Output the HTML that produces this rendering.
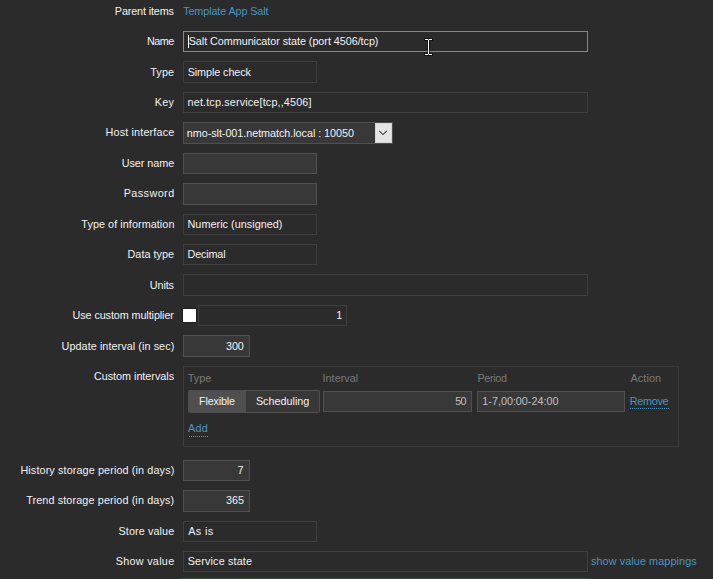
<!DOCTYPE html>
<html><head><meta charset="utf-8">
<style>
html,body{margin:0;padding:0;}
body{width:713px;height:579px;overflow:hidden;background:#2b2b2b;color:#f2f2f2;font-family:"Liberation Sans",sans-serif;font-size:10.8px;position:relative;}
.b{position:absolute;box-sizing:border-box;}
.t{position:absolute;line-height:12px;white-space:nowrap;}
</style></head><body>
<div class="b" style="left:183px;top:31px;width:405px;height:21px;border:1px solid #768d99;"></div>
<div class="b" style="left:183px;top:61px;width:134px;height:22px;border:1px solid #3e3e3e;"></div>
<div class="b" style="left:183px;top:92px;width:405px;height:21px;border:1px solid #3e3e3e;"></div>
<div class="b" style="left:183px;top:122px;width:210px;height:22px;border:1px solid #4f4f4f;background:#383838;"></div>
<div class="b" style="left:183px;top:153px;width:134px;height:21px;border:1px solid #4f4f4f;background:#383838;"></div>
<div class="b" style="left:183px;top:183px;width:134px;height:22px;border:1px solid #4f4f4f;background:#383838;"></div>
<div class="b" style="left:183px;top:214px;width:134px;height:21px;border:1px solid #3e3e3e;"></div>
<div class="b" style="left:183px;top:244px;width:134px;height:21px;border:1px solid #3e3e3e;"></div>
<div class="b" style="left:183px;top:274px;width:405px;height:22px;border:1px solid #3e3e3e;"></div>
<div class="b" style="left:198px;top:305px;width:149px;height:21px;border:1px solid #3e3e3e;"></div>
<div class="b" style="left:183px;top:335px;width:67px;height:22px;border:1px solid #4f4f4f;background:#383838;"></div>
<div class="b" style="left:183px;top:366px;width:496px;height:81px;border:1px solid #3a3a3a;"></div>
<div class="b" style="left:323px;top:391px;width:149px;height:21px;border:1px solid #4f4f4f;background:#383838;"></div>
<div class="b" style="left:477px;top:391px;width:148px;height:21px;border:1px solid #4f4f4f;background:#383838;"></div>
<div class="b" style="left:183px;top:460px;width:67px;height:21px;border:1px solid #4f4f4f;background:#383838;"></div>
<div class="b" style="left:183px;top:490px;width:67px;height:22px;border:1px solid #4f4f4f;background:#383838;"></div>
<div class="b" style="left:183px;top:521px;width:134px;height:21px;border:1px solid #3e3e3e;"></div>
<div class="b" style="left:183px;top:551px;width:405px;height:21px;border:1px solid #3e3e3e;"></div>
<div class="b" style="left:188px;top:390px;width:58px;height:23px;background:#4f4f4f;border-radius:2px 0 0 2px"></div><div class="b" style="left:246px;top:390px;width:74px;height:23px;border:1px solid #4f4f4f;border-left:0;background:#383838;border-radius:0 2px 2px 0"></div>
<div class="b" style="left:375px;top:123px;width:17px;height:20px;background:#e5e5e5;border:1px solid #d6d6d6"></div><svg class="b" style="left:375px;top:123px" width="17" height="20" viewBox="0 0 17 20"><polyline points="4.2,7.8 8,11.6 11.8,7.8" fill="none" stroke="#3c3c3c" stroke-width="1.05"/></svg>
<div class="b" style="left:183px;top:309px;width:13px;height:13px;background:#fff;box-shadow:0 0 0 1px #202020"></div>
<div class="b" style="left:188px;top:35px;width:1px;height:13px;background:#fff"></div>
<div class="b" style="left:189px;top:436px;width:20px;height:1px;background:repeating-linear-gradient(90deg,#4796c4 0 1px,transparent 1px 2px)"></div><div class="b" style="left:630px;top:408px;width:40px;height:1px;background:repeating-linear-gradient(90deg,#4796c4 0 1px,transparent 1px 2px)"></div>
<div class="b" style="left:179px;top:578px;width:412px;height:1px;background:#324a3a"></div>
<span class="t" style="left:114.83px;top:5px;letter-spacing:-0.132px;color:#f2f2f2">Parent items</span>
<span class="t" style="left:146.93px;top:35px;letter-spacing:-0.527px;color:#f2f2f2">Name</span>
<span class="t" style="left:150.26px;top:66px;letter-spacing:0.114px;color:#f2f2f2">Type</span>
<span class="t" style="left:154.83px;top:96px;letter-spacing:0.197px;color:#f2f2f2">Key</span>
<span class="t" style="left:105.53px;top:126px;letter-spacing:0.159px;color:#f2f2f2">Host interface</span>
<span class="t" style="left:121.79px;top:157px;letter-spacing:-0.056px;color:#f2f2f2">User name</span>
<span class="t" style="left:123.73px;top:187px;letter-spacing:0.432px;color:#f2f2f2">Password</span>
<span class="t" style="left:81.36px;top:218px;letter-spacing:0.067px;color:#f2f2f2">Type of information</span>
<span class="t" style="left:127.53px;top:248px;letter-spacing:0.032px;color:#f2f2f2">Data type</span>
<span class="t" style="left:149.79px;top:279px;letter-spacing:-0.104px;color:#f2f2f2">Units</span>
<span class="t" style="left:72.59px;top:309px;letter-spacing:-0.093px;color:#f2f2f2">Use custom multiplier</span>
<span class="t" style="left:61.59px;top:340px;letter-spacing:0.072px;color:#f2f2f2">Update interval (in sec)</span>
<span class="t" style="left:93.98px;top:370px;letter-spacing:-0.023px;color:#f2f2f2">Custom intervals</span>
<span class="t" style="left:20.43px;top:464px;letter-spacing:0.123px;color:#f2f2f2">History storage period (in days)</span>
<span class="t" style="left:26.16px;top:494px;letter-spacing:0.127px;color:#f2f2f2">Trend storage period (in days)</span>
<span class="t" style="left:118.53px;top:525px;letter-spacing:0.106px;color:#f2f2f2">Store value</span>
<span class="t" style="left:115.68px;top:555px;letter-spacing:0.296px;color:#f2f2f2">Show value</span>
<span class="t" style="left:183.16px;top:5px;letter-spacing:-0.105px;color:#4796c4">Template App Salt</span>
<span class="t" style="left:188.68px;top:35px;letter-spacing:-0.043px;color:#f2f2f2">Salt Communicator state (port 4506/tcp)</span>
<span class="t" style="left:187.68px;top:66px;letter-spacing:-0.087px;color:#f2f2f2">Simple check</span>
<span class="t" style="left:187.58px;top:96px;letter-spacing:0.155px;color:#f2f2f2">net.tcp.service[tcp,,4506]</span>
<span class="t" style="left:186.78px;top:127px;letter-spacing:-0.044px;color:#f2f2f2">nmo-slt-001.netmatch.local : 10050</span>
<span class="t" style="left:187.53px;top:218px;letter-spacing:0.043px;color:#f2f2f2">Numeric (unsigned)</span>
<span class="t" style="left:187.53px;top:248px;letter-spacing:-0.153px;color:#f2f2f2">Decimal</span>
<span class="t" style="left:336.24px;top:309px;letter-spacing:0px;color:#f2f2f2">1</span>
<span class="t" style="left:226.05px;top:340px;letter-spacing:-0.17px;color:#f2f2f2">300</span>
<span class="t" style="left:237.55px;top:464px;letter-spacing:0px;color:#f2f2f2">7</span>
<span class="t" style="left:226.05px;top:494px;letter-spacing:-0.029px;color:#f2f2f2">365</span>
<span class="t" style="left:188.25px;top:525px;letter-spacing:0.345px;color:#f2f2f2">As is</span>
<span class="t" style="left:187.68px;top:555px;letter-spacing:0.16px;color:#f2f2f2">Service state</span>
<span class="t" style="left:590.95px;top:555px;letter-spacing:0.104px;color:#4796c4">show value mappings</span>
<span class="t" style="left:187.66px;top:372px;letter-spacing:0.047px;color:#7a7a7a">Type</span>
<span class="t" style="left:322.5px;top:372px;letter-spacing:0.049px;color:#7a7a7a">Interval</span>
<span class="t" style="left:477.43px;top:372px;letter-spacing:-0.344px;color:#7a7a7a">Period</span>
<span class="t" style="left:630.55px;top:372px;letter-spacing:0.094px;color:#7a7a7a">Action</span>
<span class="t" style="left:199.03px;top:395px;letter-spacing:-0.178px;color:#f2f2f2">Flexible</span>
<span class="t" style="left:255.88px;top:395px;letter-spacing:0.008px;color:#f2f2f2">Scheduling</span>
<span class="t" style="left:455.22px;top:395px;letter-spacing:-0.709px;color:#c0c0c0">50</span>
<span class="t" style="left:482.34px;top:395px;letter-spacing:-0.011px;color:#c0c0c0">1-7,00:00-24:00</span>
<span class="t" style="left:629.83px;top:395px;letter-spacing:-0.289px;color:#4796c4">Remove</span>
<span class="t" style="left:188.05px;top:422px;letter-spacing:0.232px;color:#4796c4">Add</span>
<svg class="b" style="left:423px;top:37px" width="11" height="20" viewBox="0 0 11 20" shape-rendering="crispEdges"><g fill="#000" opacity="0.5"><rect x="1" y="1" width="9" height="3"/><rect x="4" y="3" width="3" height="14"/><rect x="1" y="16" width="9" height="3"/></g><g fill="#fff"><rect x="2" y="2" width="3" height="1"/><rect x="6" y="2" width="3" height="1"/><rect x="5" y="3" width="1" height="14"/><rect x="2" y="17" width="3" height="1"/><rect x="6" y="17" width="3" height="1"/></g><rect x="5" y="2" width="1" height="1" fill="#606060"/><rect x="5" y="17" width="1" height="1" fill="#606060"/></svg>
</body></html>
